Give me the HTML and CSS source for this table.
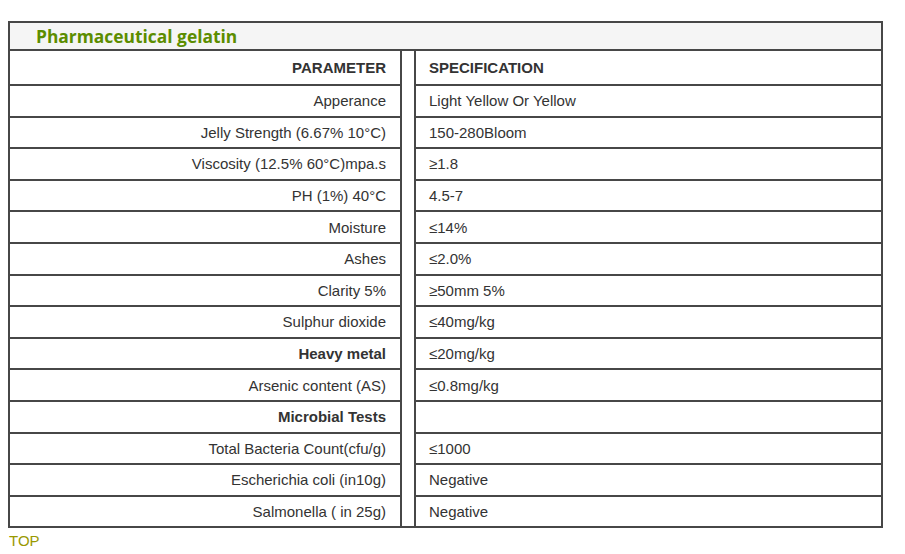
FILE: index.html
```html
<!DOCTYPE html>
<html>
<head>
<meta charset="utf-8">
<link rel="stylesheet" href="styles.css">
</head>
<body>
<div class="box">
  <div class="title">Pharmaceutical gelatin</div>
  <table class="spec">
    <tr class="head">
      <td class="param">PARAMETER</td>
      <td class="gap" rowspan="15"></td>
      <td class="val">SPECIFICATION</td>
    </tr>
    <tr><td class="param">Apperance</td><td class="val">Light Yellow Or Yellow</td></tr>
    <tr><td class="param">Jelly Strength (6.67% 10°C)</td><td class="val">150-280Bloom</td></tr>
    <tr><td class="param">Viscosity (12.5% 60°C)mpa.s</td><td class="val">≥1.8</td></tr>
    <tr><td class="param">PH (1%) 40°C</td><td class="val">4.5-7</td></tr>
    <tr><td class="param">Moisture</td><td class="val">≤14%</td></tr>
    <tr><td class="param">Ashes</td><td class="val">≤2.0%</td></tr>
    <tr><td class="param">Clarity 5%</td><td class="val">≥50mm 5%</td></tr>
    <tr><td class="param">Sulphur dioxide</td><td class="val">≤40mg/kg</td></tr>
    <tr><td class="param strong">Heavy metal</td><td class="val">≤20mg/kg</td></tr>
    <tr><td class="param">Arsenic content (AS)</td><td class="val">≤0.8mg/kg</td></tr>
    <tr><td class="param strong">Microbial Tests</td><td class="val"></td></tr>
    <tr><td class="param">Total Bacteria Count(cfu/g)</td><td class="val">≤1000</td></tr>
    <tr><td class="param">Escherichia coli (in10g)</td><td class="val">Negative</td></tr>
    <tr class="last"><td class="param">Salmonella ( in 25g)</td><td class="val">Negative</td></tr>
  </table>
</div>
<a class="top" href="#">TOP</a>
</body>
</html>
```
FILE: styles.css
```css
html, body {
  background: #fff;
}
body {
  margin: 8px;
  font-family: "Liberation Sans", Arial, sans-serif;
  font-size: 15px;
  color: #333;
}
.box {
  margin-top: 13px;
  width: 875px;
  box-sizing: border-box;
  border: 2px solid #474747;
}
.title {
  height: 26px;
  background: #f5f5f5;
  border-bottom: 2px solid #474747;
  padding-left: 26px;
  font-family: "Open Sans", "Noto Sans", sans-serif;
  font-weight: 700;
  font-size: 17.4px;
  line-height: 27px;
  color: #5c8d00;
}
.spec {
  width: 871px;
  border-collapse: separate;
  border-spacing: 0;
  table-layout: fixed;
}
.spec td {
  padding: 0;
  height: 29.6px;
  border-bottom: 2px solid #474747;
  vertical-align: middle;
}
.spec .head td {
  height: 33px;
  font-weight: 700;
}
.spec .last td {
  border-bottom: none;
}
.spec td.gap {
  width: 12px;
  border-bottom: none;
}
.spec td.param {
  width: 376px;
  text-align: right;
  padding-right: 14px;
  border-right: 2px solid #474747;
}
.spec td.val {
  text-align: left;
  padding-left: 13px;
  border-left: 2px solid #474747;
}
.spec td.strong {
  font-weight: 700;
}
.top {
  display: inline-block;
  margin-top: 4px;
  margin-left: 1px;
  color: #999900;
  text-decoration: none;
  font-size: 15px;
}
```
